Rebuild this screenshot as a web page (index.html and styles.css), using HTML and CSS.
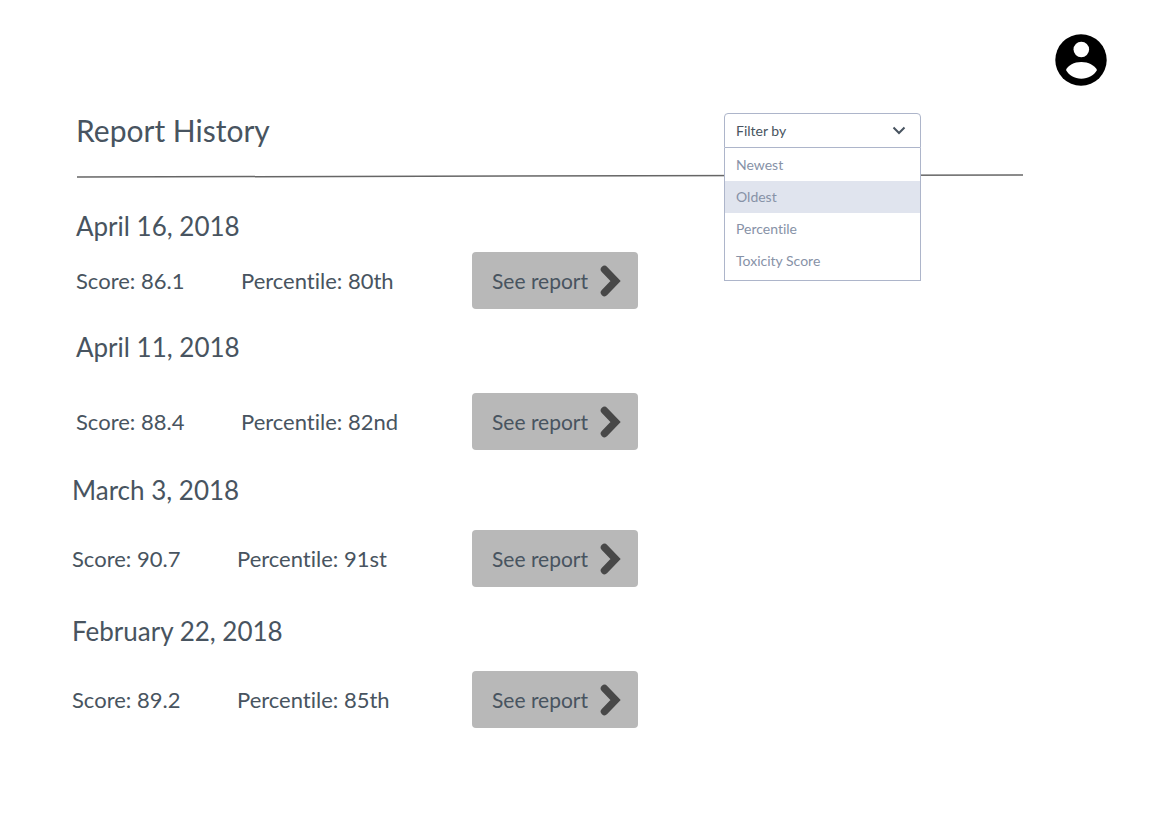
FILE: index.html
```html
<!DOCTYPE html>
<html lang="en">
<head>
<meta charset="utf-8">
<meta name="viewport" content="width=device-width, initial-scale=1">
<title>Report History</title>
<link rel="stylesheet" href="styles.css">
</head>
<body>
<svg class="sprites" aria-hidden="true">
  <symbol id="arrow" viewBox="0 0 22 32">
    <path d="M4.500 4.500 15.500 16 4.500 27.500" fill="none" stroke="#484848" stroke-width="7.500" stroke-linecap="round" stroke-linejoin="miter"/>
  </symbol>
</svg>
<header class="topbar">
  <button class="account" type="button" aria-label="Account">
    <svg class="account-icon" viewBox="0 0 52 52" aria-hidden="true">
      <circle cx="26" cy="26" r="25.700"/>
      <circle cx="26.300" cy="15.500" r="7.800" fill="#fff"/>
      <path d="M11 36C13 31.500 19 28 26.300 28S39.500 31.500 42 36C39.500 41 33 44.700 26.300 44.700S13.500 41 11 36Z" fill="#fff"/>
    </svg>
  </button>
</header>
<main class="page">
  <div class="heading">
    <h1 class="title">Report History</h1>
    <div class="filter">
      <button class="filter-toggle" type="button" aria-haspopup="listbox" aria-expanded="true" aria-controls="filter-menu">
        Filter by
        <svg class="chevron" viewBox="0 0 14 10" aria-hidden="true"><path d="M1.500 2.500 7 8 12.500 2.500" fill="none" stroke="#485460" stroke-width="2"/></svg>
      </button>
      <ul class="filter-menu" id="filter-menu" role="listbox" aria-label="Filter by">
        <li class="option" role="option" aria-selected="false">Newest</li>
        <li class="option option-active" role="option" aria-selected="true">Oldest</li>
        <li class="option" role="option" aria-selected="false">Percentile</li>
        <li class="option" role="option" aria-selected="false">Toxicity Score</li>
      </ul>
    </div>
  </div>
  <svg class="rule" viewBox="0 0 946 4" preserveAspectRatio="none" aria-hidden="true"><path d="M1 3 946 1" stroke="#666" stroke-width="1.500"/></svg>
  <section class="report report-compact">
    <h2 class="date">April 16, 2018</h2>
    <div class="details">
      <span class="score">Score: 86.1</span>
      <span class="percentile">Percentile: 80th</span>
      <button class="see" type="button">See report <svg class="arrow" aria-hidden="true"><use href="#arrow"/></svg></button>
    </div>
  </section>
  <section class="report report-roomy">
    <h2 class="date">April 11, 2018</h2>
    <div class="details">
      <span class="score">Score: 88.4</span>
      <span class="percentile">Percentile: 82nd</span>
      <button class="see" type="button">See report <svg class="arrow" aria-hidden="true"><use href="#arrow"/></svg></button>
    </div>
  </section>
  <section class="report report-outdent">
    <h2 class="date">March 3, 2018</h2>
    <div class="details">
      <span class="score">Score: 90.7</span>
      <span class="percentile">Percentile: 91st</span>
      <button class="see" type="button">See report <svg class="arrow" aria-hidden="true"><use href="#arrow"/></svg></button>
    </div>
  </section>
  <section class="report report-outdent">
    <h2 class="date">February 22, 2018</h2>
    <div class="details">
      <span class="score">Score: 89.2</span>
      <span class="percentile">Percentile: 85th</span>
      <button class="see" type="button">See report <svg class="arrow" aria-hidden="true"><use href="#arrow"/></svg></button>
    </div>
  </section>
</main>
</body>
</html>
```

FILE: styles.css
```css
* {
  box-sizing: border-box;
}

body {
  margin: 0;
  background: #fff;
  color: #485460;
  font-family: Lato, sans-serif;
  font-variant-ligatures: none;
}

button {
  border: 0;
  padding: 0;
  color: inherit;
  font-family: inherit;
  font-variant-ligatures: inherit;
  cursor: pointer;
}

.sprites {
  position: absolute;
  width: 0;
  height: 0;
}

.topbar {
  display: flex;
  justify-content: flex-end;
  padding: 34px 42px 0;
}

.account {
  background: none;
}

.account-icon {
  display: block;
  width: 52px;
  height: 52px;
}

.page {
  padding: 24px 126px 40px 76px;
}

.heading {
  display: flex;
  justify-content: space-between;
  align-items: center;
  padding-right: 102px;
}

.title {
  margin: 0;
  font-size: 30px;
  line-height: 40px;
  font-weight: 400;
}

.filter {
  position: relative;
  width: 197px;
}

.filter-toggle {
  display: flex;
  justify-content: space-between;
  align-items: center;
  width: 100%;
  height: 35px;
  padding: 0 14px 0 11px;
  border: 1px solid #adb5ca;
  border-radius: 4px 4px 0 0;
  background: #fff;
  font-size: 14px;
}

.chevron {
  width: 14px;
  height: 10px;
}

.filter-menu {
  position: absolute;
  top: 100%;
  left: 0;
  width: 100%;
  margin: 0;
  padding: 1px 0 3px;
  border: 1px solid #adb5ca;
  border-top: 0;
  background: #fff;
  list-style: none;
}

.option {
  padding: 0 11px;
  color: #8792a7;
  font-size: 14px;
  line-height: 32px;
}

.option-active {
  background: #e0e4ee;
}

.rule {
  display: block;
  width: 100%;
  height: 4px;
  margin: 24px 0 30px;
}

.report {
  display: flex;
  flex-direction: column;
  gap: 22px;
  margin-bottom: 26px;
}

.report-compact {
  gap: 8px;
  margin-bottom: 20px;
}

.report-roomy {
  gap: 28px;
  margin-bottom: 22px;
}

.report-outdent {
  margin-left: -4px;
}

.date {
  margin: 0;
  font-size: 26px;
  line-height: 36px;
  font-weight: 400;
}

.details {
  display: flex;
  align-items: center;
  font-size: 22px;
  line-height: 32px;
}

.score {
  width: 165px;
}

.percentile {
  width: 231px;
}

.report-outdent .percentile {
  width: 235px;
}

.see {
  display: flex;
  justify-content: space-between;
  align-items: center;
  width: 166px;
  height: 57px;
  padding: 0 16px 0 20px;
  border-radius: 4px;
  background: #b8b8b8;
  font-size: 21px;
}

.arrow {
  width: 22px;
  height: 32px;
}
```
